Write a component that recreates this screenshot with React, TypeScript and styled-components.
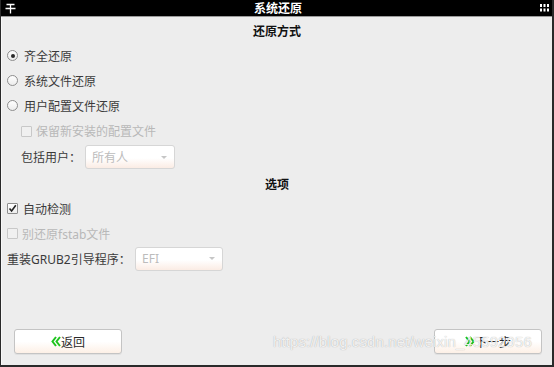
import React from "react";
import styled, { createGlobalStyle } from "styled-components";

const Global = createGlobalStyle`
  html, body { margin: 0; padding: 0; background: #ededed; }
  body { font-family: "Noto Sans", "Noto Sans CJK SC", sans-serif; }
`;

const Window = styled.div`
  position: relative;
  width: 554px;
  height: 367px;
  box-sizing: border-box;
  display: flex;
  flex-direction: column;
  background: #ededed;
  border-left: 1px solid #2a2a2a;
  border-right: 2px solid #2a2a2a;
  border-bottom: 2px solid #2a2a2a;
  overflow: hidden;
`;

const TitleBar = styled.div`
  height: 16px;
  flex: none;
  background: #000;
  display: flex;
  align-items: center;
  justify-content: space-between;
  padding: 0 3px 0 4px;
  border-bottom: 1px solid #9a9a9a;
`;

const TitleText = styled.div`
  color: #fff;
  font-weight: bold;
  font-size: 12px;
  line-height: 16px;
  font-family: "Noto Sans CJK SC", sans-serif;
`;

const Body = styled.div`
  flex: 1;
  display: flex;
  flex-direction: column;
  padding-left: 5px;
  border-left: 1px solid #f8f8f8;
  color: #3a3a3a;
  font-size: 12px;
  font-family: "Noto Sans", "Noto Sans CJK SC", sans-serif;
`;

const Header = styled.div`
  height: 26px;
  display: flex;
  align-items: center;
  justify-content: center;
  font-weight: bold;
  color: #111;
  font-family: "Noto Sans CJK SC", sans-serif;
  padding-right: 5px;
`;

const Row = styled.div<{ $h?: number; $indent?: number; $disabled?: boolean }>`
  height: ${(p) => p.$h ?? 25}px;
  display: flex;
  align-items: center;
  padding-left: ${(p) => p.$indent ?? 0}px;
  color: ${(p) => (p.$disabled ? "#b8b8b8" : "#3a3a3a")};
`;

const RadioCircle = styled.span<{ $on?: boolean }>`
  width: 11px;
  height: 11px;
  box-sizing: border-box;
  border-radius: 50%;
  border: 1px solid #8e8e8e;
  background: linear-gradient(#ffffff, #ececec);
  margin-right: 6px;
  display: flex;
  align-items: center;
  justify-content: center;
  &::after {
    content: "";
    display: ${(p) => (p.$on ? "block" : "none")};
    width: 4px;
    height: 4px;
    border-radius: 50%;
    background: #2a2a2a;
  }
`;

const Box = styled.span<{ $disabled?: boolean }>`
  width: 11px;
  height: 11px;
  box-sizing: border-box;
  border: 1px solid ${(p) => (p.$disabled ? "#c8c8c8" : "#8e8e8e")};
  border-radius: 1px;
  background: ${(p) => (p.$disabled ? "#f0f0f0" : "linear-gradient(#ffffff, #ededed)")};
  margin-right: ${(p) => (p.$disabled ? 4 : 5)}px;
  display: flex;
  align-items: center;
  justify-content: center;
`;

const Label = styled.span`
  white-space: nowrap;
`;

const Combo = styled.div<{ $w: number }>`
  width: ${(p) => p.$w}px;
  height: 24px;
  box-sizing: border-box;
  border: 1px solid #d6d6d6;
  border-radius: 3px;
  background: linear-gradient(#ffffff 55%, #fbece4);
  display: flex;
  align-items: center;
  justify-content: space-between;
  padding: 0 7px 0 6px;
  color: #bcbcbc;
`;

const Arrow = styled.span`
  width: 0;
  height: 0;
  border-left: 3.5px solid transparent;
  border-right: 3.5px solid transparent;
  border-top: 3.5px solid #c6c6c6;
`;

const Spacer = styled.div`
  flex: 1;
`;

const ButtonRow = styled.div`
  display: flex;
  justify-content: space-between;
  padding: 0 10px 11px 7px;
`;

const Button = styled.div`
  width: 108px;
  height: 25px;
  box-sizing: border-box;
  border: 1px solid #c4c4c4;
  border-radius: 3px;
  background: linear-gradient(#ffffff 50%, #fdf0e6);
  display: flex;
  align-items: center;
  justify-content: center;
  color: #2a2a2a;
  font-size: 12px;
  font-family: "Noto Sans CJK SC", sans-serif;
  box-shadow: 0 1px 0 rgba(0, 0, 0, 0.05);
`;

const Watermark = styled.div`
  position: absolute;
  left: 272px;
  top: 333px;
  font-family: "Liberation Sans", sans-serif;
  font-size: 15px;
  color: rgba(255, 255, 255, 0.85);
  text-shadow: 0 0 1px rgba(0, 0, 0, 0.35);
  letter-spacing: 0.1px;
  pointer-events: none;
  white-space: nowrap;
`;

const PinIcon = () => (
  <svg width="11" height="11" viewBox="0 0 11 11">
    <path d="M1.5 1.5H9.5M0.5 5.5H10.5M5.5 1.5V10.5" stroke="#fff" strokeWidth="1.3" fill="none" />
  </svg>
);

const GridIcon = () => (
  <svg width="9" height="8" viewBox="0 0 9 8">
    {[0, 3.5, 7].map((x) =>
      [0, 4.5].map((y) => <rect key={`${x}-${y}`} x={x} y={y} width="2" height="3" fill="#fff" />)
    )}
  </svg>
);

const Check = () => (
  <svg width="9" height="9" viewBox="0 0 9 9">
    <path d="M1.5 4.5L3.6 7L7.8 1.2" stroke="#222" strokeWidth="1.6" fill="none" />
  </svg>
);

const Chevrons = ({ dir }: { dir: "left" | "right" }) => (
  <svg width="10" height="11" viewBox="0 0 10 11" style={{ transform: dir === "right" ? "scaleX(-1)" : undefined }}>
    <path d="M5 1L1.5 5.5L5 10M9 1L5.5 5.5L9 10" stroke="#1ec41e" strokeWidth="2" fill="none" />
  </svg>
);

export default function App() {
  return (
    <>
      <Global />
      <Window>
        <TitleBar>
          <PinIcon />
          <TitleText>系统还原</TitleText>
          <GridIcon />
        </TitleBar>
        <Body>
          <Header>还原方式</Header>
          <Row>
            <RadioCircle $on />
            <Label>齐全还原</Label>
          </Row>
          <Row>
            <RadioCircle />
            <Label>系统文件还原</Label>
          </Row>
          <Row>
            <RadioCircle />
            <Label>用户配置文件还原</Label>
          </Row>
          <Row $h={26} $indent={14} $disabled>
            <Box $disabled />
            <Label>保留新安装的配置文件</Label>
          </Row>
          <Row $h={26} $indent={14}>
            <Label style={{ width: 64 }}>包括用户：</Label>
            <Combo $w={90}>
              <span>所有人</span>
              <Arrow />
            </Combo>
          </Row>
          <Header>选项</Header>
          <Row>
            <Box>
              <Check />
            </Box>
            <Label>自动检测</Label>
          </Row>
          <Row $disabled>
            <Box $disabled />
            <Label>别还原fstab文件</Label>
          </Row>
          <Row>
            <Label style={{ width: 128 }}>重装GRUB2引导程序：</Label>
            <Combo $w={88}>
              <span>EFI</span>
              <Arrow />
            </Combo>
          </Row>
          <Spacer />
          <ButtonRow>
            <Button>
              <Chevrons dir="left" />
              返回
            </Button>
            <Button>
              <Chevrons dir="right" />
              下一步
            </Button>
          </ButtonRow>
        </Body>
        <Watermark>https://blog.csdn.net/weixin_45592956</Watermark>
      </Window>
    </>
  );
}
